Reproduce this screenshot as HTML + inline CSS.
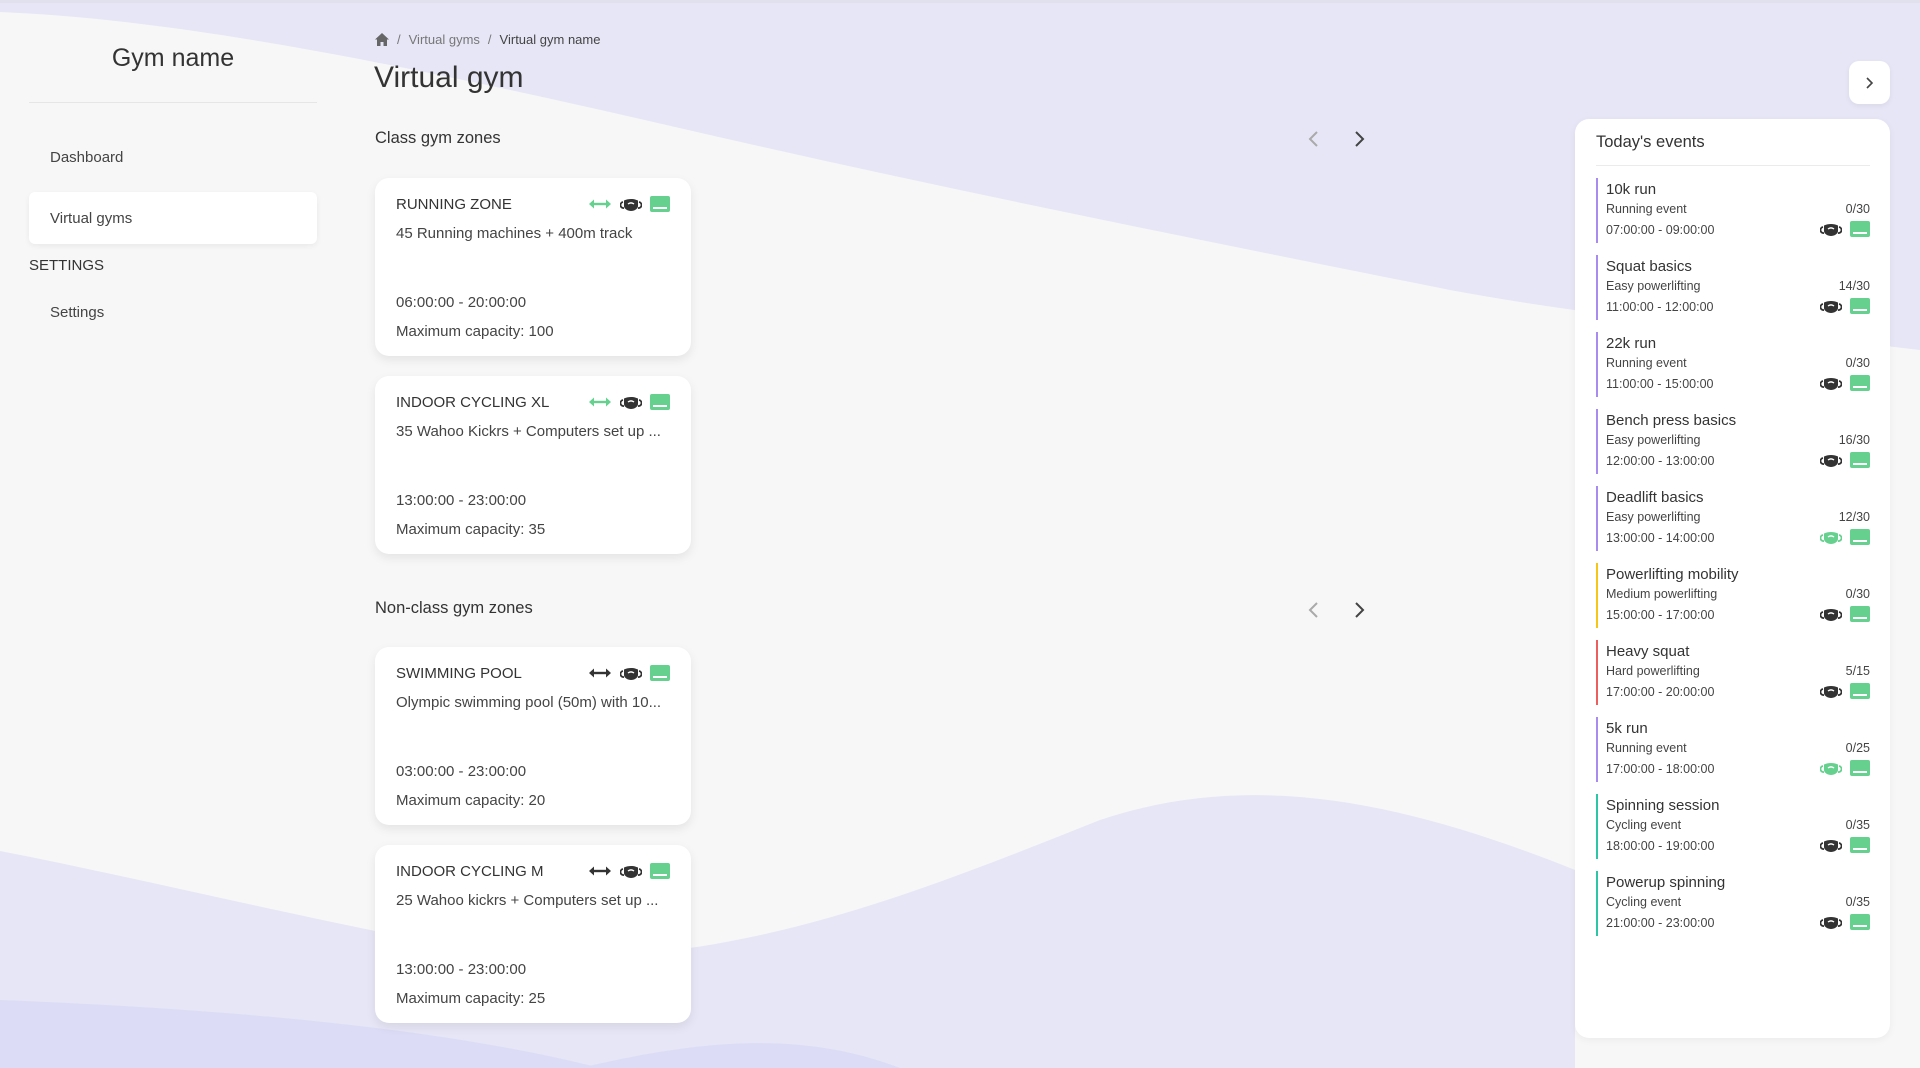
<!DOCTYPE html>
<html><head><meta charset="utf-8"><style>
*{box-sizing:border-box;margin:0;padding:0}
body{width:1920px;height:1068px;overflow:hidden;background:#f7f7f7;font-family:"Liberation Sans",sans-serif;color:#3c3c3c;position:relative}
.bg{position:absolute;left:0;top:0}
.abs{position:absolute}
.card{position:absolute;left:375px;width:316px;height:178px;background:#fff;border-radius:14px;box-shadow:0 4px 10px rgba(0,0,0,.08)}
.card .t{position:absolute;left:21px;top:18px;font-size:15px;color:#333}
.card .d{position:absolute;left:21px;top:47px;font-size:15px;color:#444}
.card .h{position:absolute;left:21px;top:116px;font-size:15px;color:#444}
.card .c{position:absolute;left:21px;top:145px;font-size:15px;color:#444}
.card .ic{position:absolute;right:21px;top:18px;display:flex;gap:8px;align-items:center}
.ev{position:absolute;left:1596px;width:274px;height:65px;border-left:2px solid #a78bef;padding-left:8px}
.ev .n{font-size:15px;color:#333;position:absolute;top:3px;left:8px}
.ev .s{font-size:12.5px;color:#444;position:absolute;top:24px;left:8px}
.ev .tm{font-size:12.5px;color:#444;position:absolute;top:45px;left:8px}
.ev .cap{font-size:12.5px;color:#444;position:absolute;top:24px;right:0}
.ev .ei{position:absolute;right:0;top:43px;display:flex;gap:8px;align-items:center}
.scr{width:20px;height:16px;background:#66d18f;border-radius:2px;position:relative}
.scr:after{content:"";position:absolute;left:3px;right:3px;bottom:3px;height:2px;background:#fff}
</style></head><body>
<svg class="bg" width="1920" height="1068">
<rect width="1920" height="1068" fill="#f7f7f7"/>
<path d="M0 0H1920V350C1750 330 1600 318 1450 290 1200 240 950 190 710 135 450 75 200 20 0 12Z" fill="#e6e6f6"/>
<path d="M0 851C150 880 350 930 480 950 700 980 900 900 1100 820 1250 770 1400 800 1575 870V1068H0Z" fill="#e6e6f6"/>
<path d="M0 1000C250 1010 450 1030 600 1068H0Z" fill="#dcdcf6"/>
<path d="M580 1068C700 1040 800 1030 900 1068Z" fill="#dcdcf6"/>
</svg>
<div class="abs" style="left:0;top:0;width:1920px;height:3px;background:#e1e1ee"></div>
<div class="abs" style="left:29px;width:288px;top:44px;text-align:center;font-size:25px;color:#333">Gym name</div>
<div class="abs" style="left:29px;width:288px;top:102px;height:1px;background:#e6e6e6"></div>
<div class="abs" style="left:50px;top:149px;font-size:15px;color:#444">Dashboard</div>
<div class="abs" style="left:29px;top:192px;width:288px;height:52px;background:#fff;border-radius:6px;box-shadow:0 2px 6px rgba(0,0,0,.06)"></div>
<div class="abs" style="left:50px;top:210px;font-size:15px;color:#444">Virtual gyms</div>
<div class="abs" style="left:29px;top:257px;font-size:15px;color:#333">SETTINGS</div>
<div class="abs" style="left:50px;top:304px;font-size:15px;color:#444">Settings</div>

<div class="abs" style="left:375px;top:32px;font-size:13px;color:#777;display:flex;align-items:center;gap:8px">
<svg width="14" height="13" viewBox="0 0 14 13"><path d="M7 0L0 6.5H2V13H5.5V9H8.5V13H12V6.5H14Z" fill="#666"/></svg><span>/</span><span>Virtual gyms</span><span>/</span><span style="color:#444">Virtual gym name</span></div>
<div class="abs" style="left:374px;top:61px;font-size:30px;color:#333">Virtual gym</div>
<div class="abs" style="left:375px;top:129px;font-size:16.5px;color:#333">Class gym zones</div>
<div class="abs" style="left:375px;top:599px;font-size:16.5px;color:#333">Non-class gym zones</div>
<svg class="abs" style="left:1305px;top:129px" width="70" height="20"><path d="M12 3L5 10L12 17" stroke="#aaa" stroke-width="2" fill="none"/><path d="M51 3L58 10L51 17" stroke="#444" stroke-width="2" fill="none"/></svg>
<svg class="abs" style="left:1305px;top:600px" width="70" height="20"><path d="M12 3L5 10L12 17" stroke="#aaa" stroke-width="2" fill="none"/><path d="M51 3L58 10L51 17" stroke="#444" stroke-width="2" fill="none"/></svg>

<svg width="0" height="0" style="position:absolute"><defs>
<g id="db"><path d="M1 6L6 1.5V10.5ZM23 6L18 1.5V10.5Z" fill="currentColor"/><path d="M5 6H19" stroke="currentColor" stroke-width="2.4"/></g>
<g id="mk"><path d="M3 5A3 3 0 1 0 4 11M19 5A3 3 0 1 1 18 11" stroke="currentColor" stroke-width="1.8" fill="none"/><path d="M4 3.5C8 1.5 14 1.5 18 3.5V9C18 12 14 14 11 14 8 14 4 12 4 9Z" fill="currentColor"/><path d="M8 7C10 5.5 12 5.5 14 7" stroke="#fff" stroke-width="1.4" fill="none"/></g>
</defs></svg>

<div class="card" style="top:178px"><div class="t">RUNNING ZONE</div><div class="ic"><svg width="24" height="12" style="color:#66d18f"><use href="#db"/></svg><svg width="22" height="15" style="color:#333"><use href="#mk"/></svg><div class="scr"></div></div><div class="d">45 Running machines + 400m track</div><div class="h">06:00:00 - 20:00:00</div><div class="c">Maximum capacity: 100</div></div>
<div class="card" style="top:376px"><div class="t">INDOOR CYCLING XL</div><div class="ic"><svg width="24" height="12" style="color:#66d18f"><use href="#db"/></svg><svg width="22" height="15" style="color:#333"><use href="#mk"/></svg><div class="scr"></div></div><div class="d">35 Wahoo Kickrs + Computers set up ...</div><div class="h">13:00:00 - 23:00:00</div><div class="c">Maximum capacity: 35</div></div>
<div class="card" style="top:647px"><div class="t">SWIMMING POOL</div><div class="ic"><svg width="24" height="12" style="color:#333"><use href="#db"/></svg><svg width="22" height="15" style="color:#333"><use href="#mk"/></svg><div class="scr"></div></div><div class="d">Olympic swimming pool (50m) with 10...</div><div class="h">03:00:00 - 23:00:00</div><div class="c">Maximum capacity: 20</div></div>
<div class="card" style="top:845px"><div class="t">INDOOR CYCLING M</div><div class="ic"><svg width="24" height="12" style="color:#333"><use href="#db"/></svg><svg width="22" height="15" style="color:#333"><use href="#mk"/></svg><div class="scr"></div></div><div class="d">25 Wahoo kickrs + Computers set up ...</div><div class="h">13:00:00 - 23:00:00</div><div class="c">Maximum capacity: 25</div></div>

<div class="abs" style="left:1849px;top:61px;width:41px;height:43px;background:#fff;border-radius:10px;box-shadow:0 2px 6px rgba(0,0,0,.06)"><svg width="41" height="43"><path d="M18 17L23 22L18 27" stroke="#444" stroke-width="1.6" fill="none"/></svg></div>
<div class="abs" style="left:1575px;top:119px;width:315px;height:919px;background:#fff;border-radius:14px;box-shadow:0 2px 8px rgba(0,0,0,.05)"></div>
<div class="abs" style="left:1596px;top:133px;font-size:16.5px;color:#333">Today's events</div>
<div class="abs" style="left:1596px;top:165px;width:274px;height:1px;background:#ebebeb"></div>

<div class="ev" style="top:178px"><div class="n">10k run</div><div class="s">Running event</div><div class="tm">07:00:00 - 09:00:00</div><div class="cap">0/30</div><div class="ei"><svg width="22" height="15" style="color:#333"><use href="#mk"/></svg><div class="scr"></div></div></div>
<div class="ev" style="top:255px"><div class="n">Squat basics</div><div class="s">Easy powerlifting</div><div class="tm">11:00:00 - 12:00:00</div><div class="cap">14/30</div><div class="ei"><svg width="22" height="15" style="color:#333"><use href="#mk"/></svg><div class="scr"></div></div></div>
<div class="ev" style="top:332px"><div class="n">22k run</div><div class="s">Running event</div><div class="tm">11:00:00 - 15:00:00</div><div class="cap">0/30</div><div class="ei"><svg width="22" height="15" style="color:#333"><use href="#mk"/></svg><div class="scr"></div></div></div>
<div class="ev" style="top:409px"><div class="n">Bench press basics</div><div class="s">Easy powerlifting</div><div class="tm">12:00:00 - 13:00:00</div><div class="cap">16/30</div><div class="ei"><svg width="22" height="15" style="color:#333"><use href="#mk"/></svg><div class="scr"></div></div></div>
<div class="ev" style="top:486px"><div class="n">Deadlift basics</div><div class="s">Easy powerlifting</div><div class="tm">13:00:00 - 14:00:00</div><div class="cap">12/30</div><div class="ei"><svg width="22" height="15" style="color:#66d18f"><use href="#mk"/></svg><div class="scr"></div></div></div>
<div class="ev" style="top:563px;border-color:#f5c518"><div class="n">Powerlifting mobility</div><div class="s">Medium powerlifting</div><div class="tm">15:00:00 - 17:00:00</div><div class="cap">0/30</div><div class="ei"><svg width="22" height="15" style="color:#333"><use href="#mk"/></svg><div class="scr"></div></div></div>
<div class="ev" style="top:640px;border-color:#ec5f5f"><div class="n">Heavy squat</div><div class="s">Hard powerlifting</div><div class="tm">17:00:00 - 20:00:00</div><div class="cap">5/15</div><div class="ei"><svg width="22" height="15" style="color:#333"><use href="#mk"/></svg><div class="scr"></div></div></div>
<div class="ev" style="top:717px"><div class="n">5k run</div><div class="s">Running event</div><div class="tm">17:00:00 - 18:00:00</div><div class="cap">0/25</div><div class="ei"><svg width="22" height="15" style="color:#66d18f"><use href="#mk"/></svg><div class="scr"></div></div></div>
<div class="ev" style="top:794px;border-color:#2ec4a6"><div class="n">Spinning session</div><div class="s">Cycling event</div><div class="tm">18:00:00 - 19:00:00</div><div class="cap">0/35</div><div class="ei"><svg width="22" height="15" style="color:#333"><use href="#mk"/></svg><div class="scr"></div></div></div>
<div class="ev" style="top:871px;border-color:#2ec4a6"><div class="n">Powerup spinning</div><div class="s">Cycling event</div><div class="tm">21:00:00 - 23:00:00</div><div class="cap">0/35</div><div class="ei"><svg width="22" height="15" style="color:#333"><use href="#mk"/></svg><div class="scr"></div></div></div>
</body></html>
